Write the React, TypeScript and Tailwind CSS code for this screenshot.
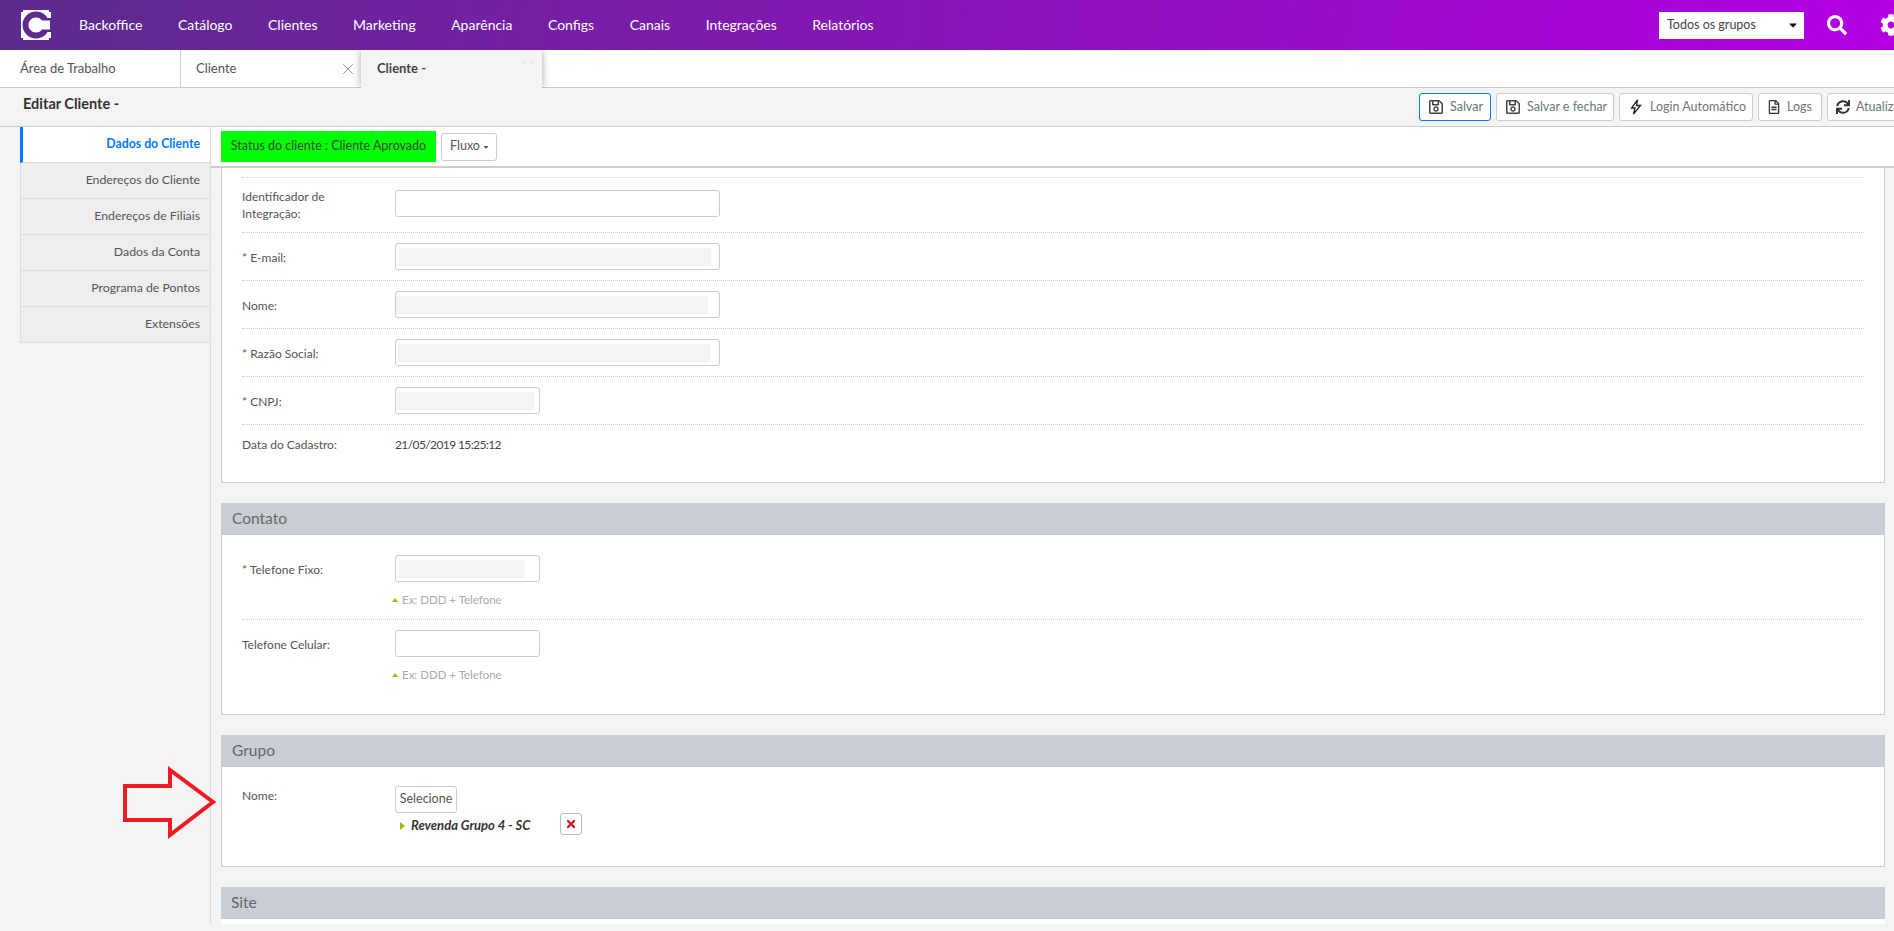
import React from "react";
import { FaRegSave, FaRegFileAlt, FaSync, FaSearch, FaCog, FaTimes, FaCaretDown } from "react-icons/fa";
import { X } from "lucide-react";

const nav = [
  ["Backoffice", "ml-[28px]"],
  ["Catálogo", "ml-[35.5px]"],
  ["Clientes", "ml-[35.5px]"],
  ["Marketing", "ml-[35.5px]"],
  ["Aparência", "ml-[35.5px]"],
  ["Configs", "ml-[35.5px]"],
  ["Canais", "ml-[35.5px]"],
  ["Integrações", "ml-[35.5px]"],
  ["Relatórios", "ml-[35.5px]"],
];

const side = ["Endereços do Cliente", "Endereços de Filiais", "Dados da Conta", "Programa de Pontos", "Extensões"];

function Logo() {
  return (
    <svg width="30" height="30" viewBox="0 0 30 30" className="shrink-0">
      <path fill="#fff" d="M0 0H30V30H0Z" />
      <path fill="#5f2a8f" d="M15 1.500C7.500 1.500 1.500 7.500 1.500 15S7.500 28.500 15 28.500C20 28.500 24.300 26 26.500 22H30V8H26.500C24.300 4 20 1.500 15 1.500Z" />
      <path fill="#fff" d="M15 7.500C10.800 7.500 7.500 10.800 7.500 15S10.800 22.500 15 22.500C17.500 22.500 19.700 21.300 21 19.500H29V10.500H21C19.700 8.700 17.500 7.500 15 7.500Z" />
      <path fill="#5f2a8f" d="M0 0H2V2H0Z M28 0H30V2H28Z M0 28H2V30H0Z M28 28H30V30H28Z" />
    </svg>
  );
}

function Btn({ icon, label, w, active }: { icon: React.ReactNode; label: string; w: string; active?: boolean }) {
  return (
    <div className={`flex h-[28px] shrink-0 items-center gap-[6px] rounded-[3px] border bg-white pl-[8px] text-[#6c757d] ${w} ${active ? "border-[#007bff]" : "border-[#ccc]"}`}>
      {icon}
      <span className="whitespace-nowrap">{label}</span>
    </div>
  );
}

function Row({ label, children, h = "h-[48px]", pb = "" }: { label: React.ReactNode; children: React.ReactNode; h?: string; pb?: string }) {
  return (
    <div className={`flex items-center border-b border-dotted border-[#ccc] ${h} ${pb}`}>
      <div className="w-[153px] shrink-0 pt-[2px] text-[12px] leading-[17px] text-[#555]">{label}</div>
      {children}
    </div>
  );
}

function Field({ w, fillW, ml }: { w: string; fillW?: string; ml?: string }) {
  return (
    <div className={`flex h-[27px] items-center rounded-[3px] border border-[#ccc] bg-white ${w}`}>
      {fillW && <div className={`h-[18px] bg-[#f4f4f4] ${fillW} ${ml}`} />}
    </div>
  );
}

function Hint() {
  return (
    <div className="mt-[11px] flex h-[14px] items-center text-[11.5px] text-[#aaa]">
      <span className="ml-[-3px] mr-[4px] h-0 w-0 border-x-[3.5px] border-b-[4px] border-x-transparent border-b-[#99bb00]" />
      Ex: DDD + Telefone
    </div>
  );
}

function PanelHead({ title }: { title: string }) {
  return <div className="flex h-[32px] items-center bg-[#c8ced4] pl-[10px] text-[15.5px] text-[#666]">{title}</div>;
}

const bolt = (
  <svg width="16" height="16" viewBox="0 0 16 16" fill="none" stroke="#222" strokeWidth="1.300" strokeLinejoin="miter">
    <path d="M9.500 1 3.500 9H7L5.500 15 12.500 6.500H8.500L9.500 1Z" />
  </svg>
);

export default function App() {
  return (
    <div className="relative flex h-[931px] w-[1894px] flex-col overflow-hidden bg-[#f4f4f4] font-['Lato','Liberation_Sans',sans-serif] text-[12.5px] text-[#555]">
      <header className="flex h-[50px] shrink-0 items-center bg-[linear-gradient(100deg,#5b2c8c_0%,#9a0cc8_70%,#b300e4_100%)] pl-[21px] text-white">
        <Logo />
        <nav className="flex pb-[2px] text-[14px]">
          {nav.map(([n, c]) => (
            <span key={n} className={c}>{n}</span>
          ))}
        </nav>
        <div className="ml-auto flex h-[27px] w-[145px] items-center justify-between bg-white pl-[8px] pr-[5px] text-[12.5px] text-[#444]">
          Todos os grupos
          <FaCaretDown className="text-[12px] text-black" />
        </div>
        <FaSearch className="ml-[23px] shrink-0 text-[20px]" />
        <FaCog className="ml-[33px] mr-[-8px] shrink-0 text-[22px]" />
      </header>

      <div className="flex h-[38px] shrink-0 border-b border-[#ccc] bg-white text-[13px]">
        <div className="flex w-[181px] items-center border-r border-[#ccc] pl-[20px] text-[#555]">Área de Trabalho</div>
        <div className="flex w-[180px] items-center justify-between pl-[15px] pr-[4px] text-[#555]">
          Cliente
          <X size={18} strokeWidth={1.2} className="text-[#888]" />
        </div>
        <div className="relative flex h-[38px] w-[181px] items-center bg-[#f4f4f4] pl-[16px] font-bold text-[#444] shadow-[0_0_8px_rgba(0,0,0,0.35)] [clip-path:inset(0_-10px_0_-10px)]">
          Cliente -
          <span className="absolute left-[163px] top-[12px] h-[1px] w-[1px] bg-[#bbb]" />
          <span className="absolute left-[170px] top-[12px] h-[1px] w-[1px] bg-[#bbb]" />
        </div>
      </div>

      <div className="flex h-[38px] shrink-0 items-start overflow-hidden pl-[23px] pt-[5px]">
        <div className="w-[1396px] shrink-0 text-[14.5px] font-bold leading-[21px] text-[#333]">Editar Cliente -</div>
        <div className="flex gap-[5px]">
          <Btn active w="w-[72px]" icon={<FaRegSave className="text-[16px] text-[#444]" />} label="Salvar" />
          <Btn w="w-[118px]" icon={<FaRegSave className="text-[16px] text-[#444]" />} label="Salvar e fechar" />
          <Btn w="w-[134px]" icon={bolt} label="Login Automático" />
          <Btn w="w-[64px]" icon={<FaRegFileAlt className="text-[14px] text-[#333]" />} label="Logs" />
          <Btn w="w-[100px]" icon={<FaSync className="text-[14px] text-[#333]" />} label="Atualizar" />
        </div>
      </div>

      <div className="flex h-[798px] shrink-0 border-t border-[#ccc] pl-[20px]">
        <aside className="w-[190px] shrink-0 text-[12.3px]">
          <div className="flex h-[36px] items-center justify-end border-b border-l-[3px] border-[#ddd] border-l-[#007bff] bg-white pr-[10px] font-bold text-[#007bff]">
            Dados do Cliente
          </div>
          {side.map((s) => (
            <div key={s} className="flex h-[36px] items-center justify-end border-b border-l border-[#ddd] bg-[#eee] pr-[10px]">
              {s}
            </div>
          ))}
        </aside>
        <main className="flex min-w-0 flex-1 flex-col border-l border-[#ddd]">
          <div className="flex h-[41px] shrink-0 items-center gap-[5px] border-b-2 border-[#ccc] bg-white pl-[10px]">
            <div className="flex h-[31px] w-[215px] items-center justify-center bg-[#00ff00] text-[#444]">Status do cliente : Cliente Aprovado</div>
            <div className="flex h-[28px] w-[56px] items-center justify-center gap-[2px] rounded-[3px] border border-[#ccc] pl-[2px] text-[12.5px] text-[#555]">
              Fluxo <FaCaretDown className="text-[8px]" />
            </div>
          </div>
          <div className="ml-[10px] mr-[9px]">
            <section className="border-x border-b border-[#ccc] bg-white px-[20px] pb-[28px]">
              <div className="h-[10px] border-b border-dotted border-[#ccc]" />
              <Row label={<>Identificador de<br />Integração:</>} h="h-[55px]" pb="pb-[3px]"><Field w="w-[325px]" /></Row>
              <Row label="* E-mail:"><Field w="w-[325px]" fillW="w-[312px]" ml="ml-[3px]" /></Row>
              <Row label="Nome:"><Field w="w-[325px]" fillW="w-[312px]" ml="ml-0" /></Row>
              <Row label="* Razão Social:"><Field w="w-[325px]" fillW="w-[312px]" ml="ml-[2px]" /></Row>
              <Row label="* CNPJ:"><Field w="w-[145px]" fillW="w-[137px]" ml="ml-[1px]" /></Row>
              <div className="flex items-center pt-[11px]">
                <div className="w-[153px] shrink-0 text-[12px] text-[#555]">Data do Cadastro:</div>
                <span className="text-[12px] tracking-[-0.6px] text-[#444]">21/05/2019 15:25:12</span>
              </div>
            </section>

            <section className="mt-[20px] border-x border-b border-[#ccc] bg-white">
              <PanelHead title="Contato" />
              <div className="px-[20px] pb-[32px] pt-[20px]">
                <div className="border-b border-dotted border-[#ccc] pb-[12px]">
                  <div className="flex items-center">
                    <div className="w-[153px] shrink-0 pt-[3px] text-[12px]">* Telefone Fixo:</div>
                    <Field w="w-[145px]" fillW="w-[126px]" ml="ml-[3px]" />
                  </div>
                  <div className="ml-[153px]"><Hint /></div>
                </div>
                <div className="mt-[10px]">
                  <div className="flex items-center">
                    <div className="w-[153px] shrink-0 pt-[3px] text-[12px]">Telefone Celular:</div>
                    <Field w="w-[145px]" />
                  </div>
                  <div className="ml-[153px]"><Hint /></div>
                </div>
              </div>
            </section>

            <section className="mt-[20px] h-[132px] border-x border-b border-[#ccc] bg-white">
              <PanelHead title="Grupo" />
              <div className="flex px-[20px] pt-[19px]">
                <div className="w-[153px] shrink-0 pt-[1px] text-[12px]">Nome:</div>
                <div>
                  <div className="flex h-[27px] w-[62px] items-center justify-center rounded-[3px] border border-[#ccc]">Selecione</div>
                  <div className="flex items-start">
                    <div className="ml-[5px] mt-[3px] flex items-center text-[13px] font-bold italic text-[#333]">
                      <span className="mr-[6px] h-0 w-0 border-y-[4px] border-l-[5px] border-y-transparent border-l-[#99bb00]" />
                      Revenda Grupo 4 - SC
                    </div>
                    <div className="ml-[30px] flex h-[22px] w-[22px] items-center justify-center rounded-[3px] border border-[#bbb] text-[#c8102e]">
                      <FaTimes className="text-[12px]" />
                    </div>
                  </div>
                </div>
              </div>
            </section>

            <section className="mt-[20px] h-[37px] bg-white">
              <PanelHead title="Site" />
            </section>
          </div>
        </main>
      </div>

      <svg width="100" height="80" viewBox="0 0 100 80" className="absolute left-[120px] top-[763px]">
        <path d="M5 23H50V7L93 39 50 72V57H5Z" fill="none" stroke="#ed1c24" strokeWidth="4" />
      </svg>
    </div>
  );
}
